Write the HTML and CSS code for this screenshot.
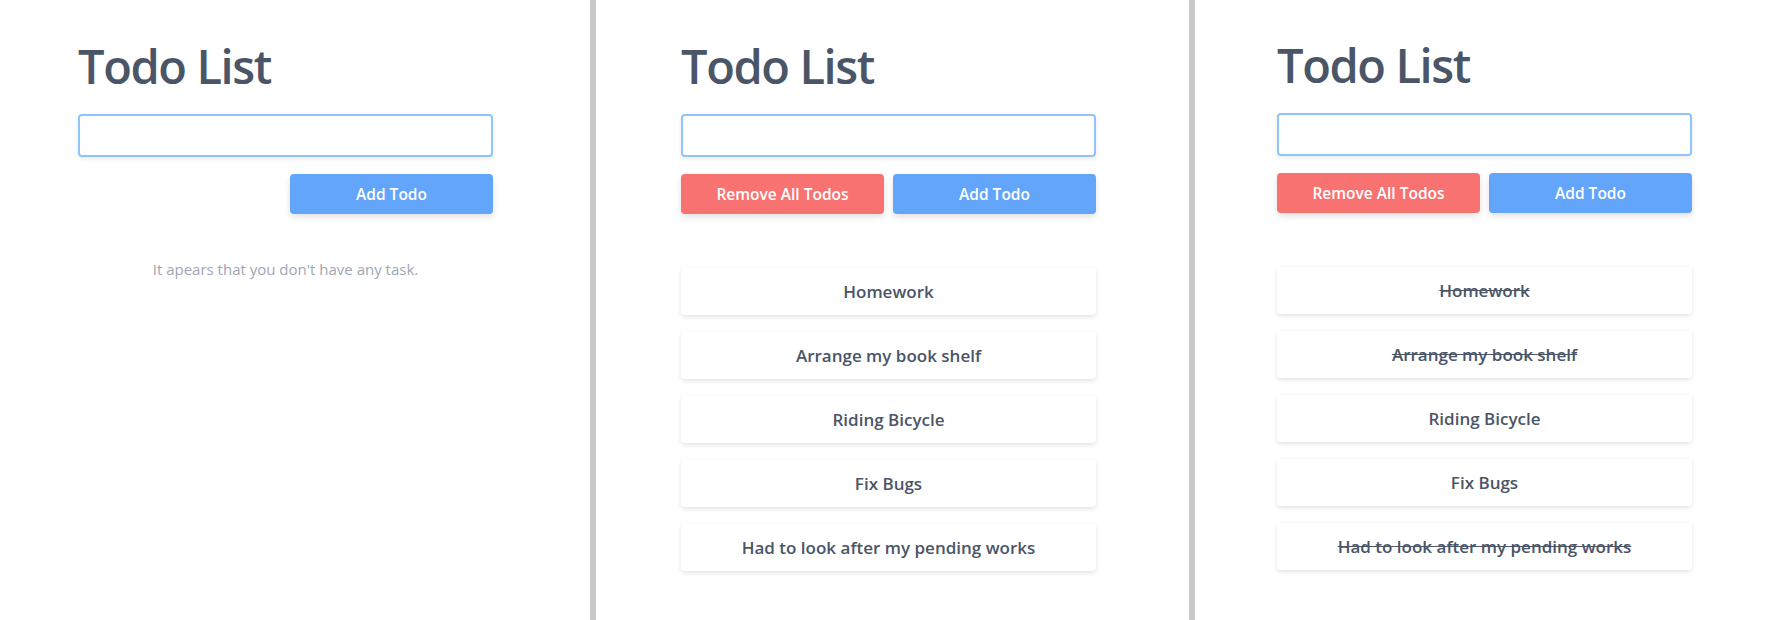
FILE: index.html
```html
<!DOCTYPE html>
<html lang="en">
<head>
<meta charset="utf-8">
<title>Todo List</title>
<link rel="stylesheet" href="styles.css">
</head>
<body>
<div class="frames">
  <section class="panel panel--empty">
    <div class="todo">
      <h1 class="todo__title">Todo List</h1>
      <input class="todo__input" type="text">
      <div class="todo__actions todo__actions--end">
        <button class="btn btn--blue">Add Todo</button>
      </div>
      <p class="todo__empty">It apears that you don't have any task.</p>
    </div>
  </section>
  <section class="panel panel--list">
    <div class="todo">
      <h1 class="todo__title">Todo List</h1>
      <input class="todo__input" type="text">
      <div class="todo__actions">
        <button class="btn btn--red">Remove All Todos</button>
        <button class="btn btn--blue">Add Todo</button>
      </div>
      <ul class="todo__list">
        <li class="todo__item">Homework</li>
        <li class="todo__item">Arrange my book shelf</li>
        <li class="todo__item">Riding Bicycle</li>
        <li class="todo__item">Fix Bugs</li>
        <li class="todo__item">Had to look after my pending works</li>
      </ul>
    </div>
  </section>
  <section class="panel panel--done">
    <div class="todo">
      <h1 class="todo__title">Todo List</h1>
      <input class="todo__input" type="text">
      <div class="todo__actions">
        <button class="btn btn--red">Remove All Todos</button>
        <button class="btn btn--blue">Add Todo</button>
      </div>
      <ul class="todo__list">
        <li class="todo__item todo__item--done">Homework</li>
        <li class="todo__item todo__item--done">Arrange my book shelf</li>
        <li class="todo__item">Riding Bicycle</li>
        <li class="todo__item">Fix Bugs</li>
        <li class="todo__item todo__item--done">Had to look after my pending works</li>
      </ul>
    </div>
  </section>
</div>
</body>
</html>
```
FILE: styles.css
```css
* { box-sizing: border-box; }
html, body { margin: 0; padding: 0; background: #ffffff; }
body {
  font-family: "Open Sans", "Noto Sans", sans-serif;
  color: #4a5568;
  overflow: hidden;
}
.frames {
  display: grid;
  grid-template-columns: 590px 599px 599px;
  height: 620px;
}
.panel {
  background: #ffffff;
  height: 620px;
  padding-top: 42px;
}
.panel--empty { padding-left: 78px; }
.panel--list { border-left: 6px solid #c8c8c8; padding-left: 85px; }
.panel--done { border-left: 6px solid #c8c8c8; padding-left: 82px; padding-top: 41px; }

.todo {
  width: 415px;
  display: flex;
  flex-direction: column;
}
.todo__title {
  margin: 0 0 24px;
  font-size: 47px;
  line-height: 48px;
  font-weight: 600;
  letter-spacing: -1.4px;
  color: #4a5568;
}
.todo__input {
  height: 43px;
  width: 100%;
  border: 2px solid #90c4fb;
  border-radius: 4px;
  background: #fff;
  box-shadow: 0 2px 4px rgba(0,0,0,0.08);
  outline: none;
  font: inherit;
  padding: 0 12px;
}
.todo__actions {
  margin-top: 17px;
  display: grid;
  grid-template-columns: 1fr 1fr;
  gap: 9px;
}
.todo__actions--end .btn { grid-column: 2; }
.btn {
  height: 40px;
  border: 0;
  border-radius: 4px;
  color: #ffffff;
  font-family: "Open Sans", "Noto Sans", sans-serif;
  font-size: 15.5px;
  font-weight: 600;
  box-shadow: 0 3px 6px rgba(0,0,0,0.12);
  padding: 0;
}
.btn--blue { background: #62a5fa; }
.btn--red { background: #f87272; }

.todo__empty {
  margin: 45px 0 0;
  text-align: center;
  font-size: 15px;
  line-height: 20px;
  color: #a0a6b4;
}
.todo__list {
  list-style: none;
  margin: 54px 0 0;
  padding: 0;
  display: flex;
  flex-direction: column;
  gap: 17px;
}
.todo__item {
  height: 47px;
  display: flex;
  align-items: center;
  justify-content: center;
  background: #ffffff;
  border-radius: 4px;
  box-shadow: 0 2px 5px rgba(0,0,0,0.11);
  font-size: 17px;
  font-weight: 600;
  color: #4a5568;
}
.todo__item--done { text-decoration: line-through; }
```
